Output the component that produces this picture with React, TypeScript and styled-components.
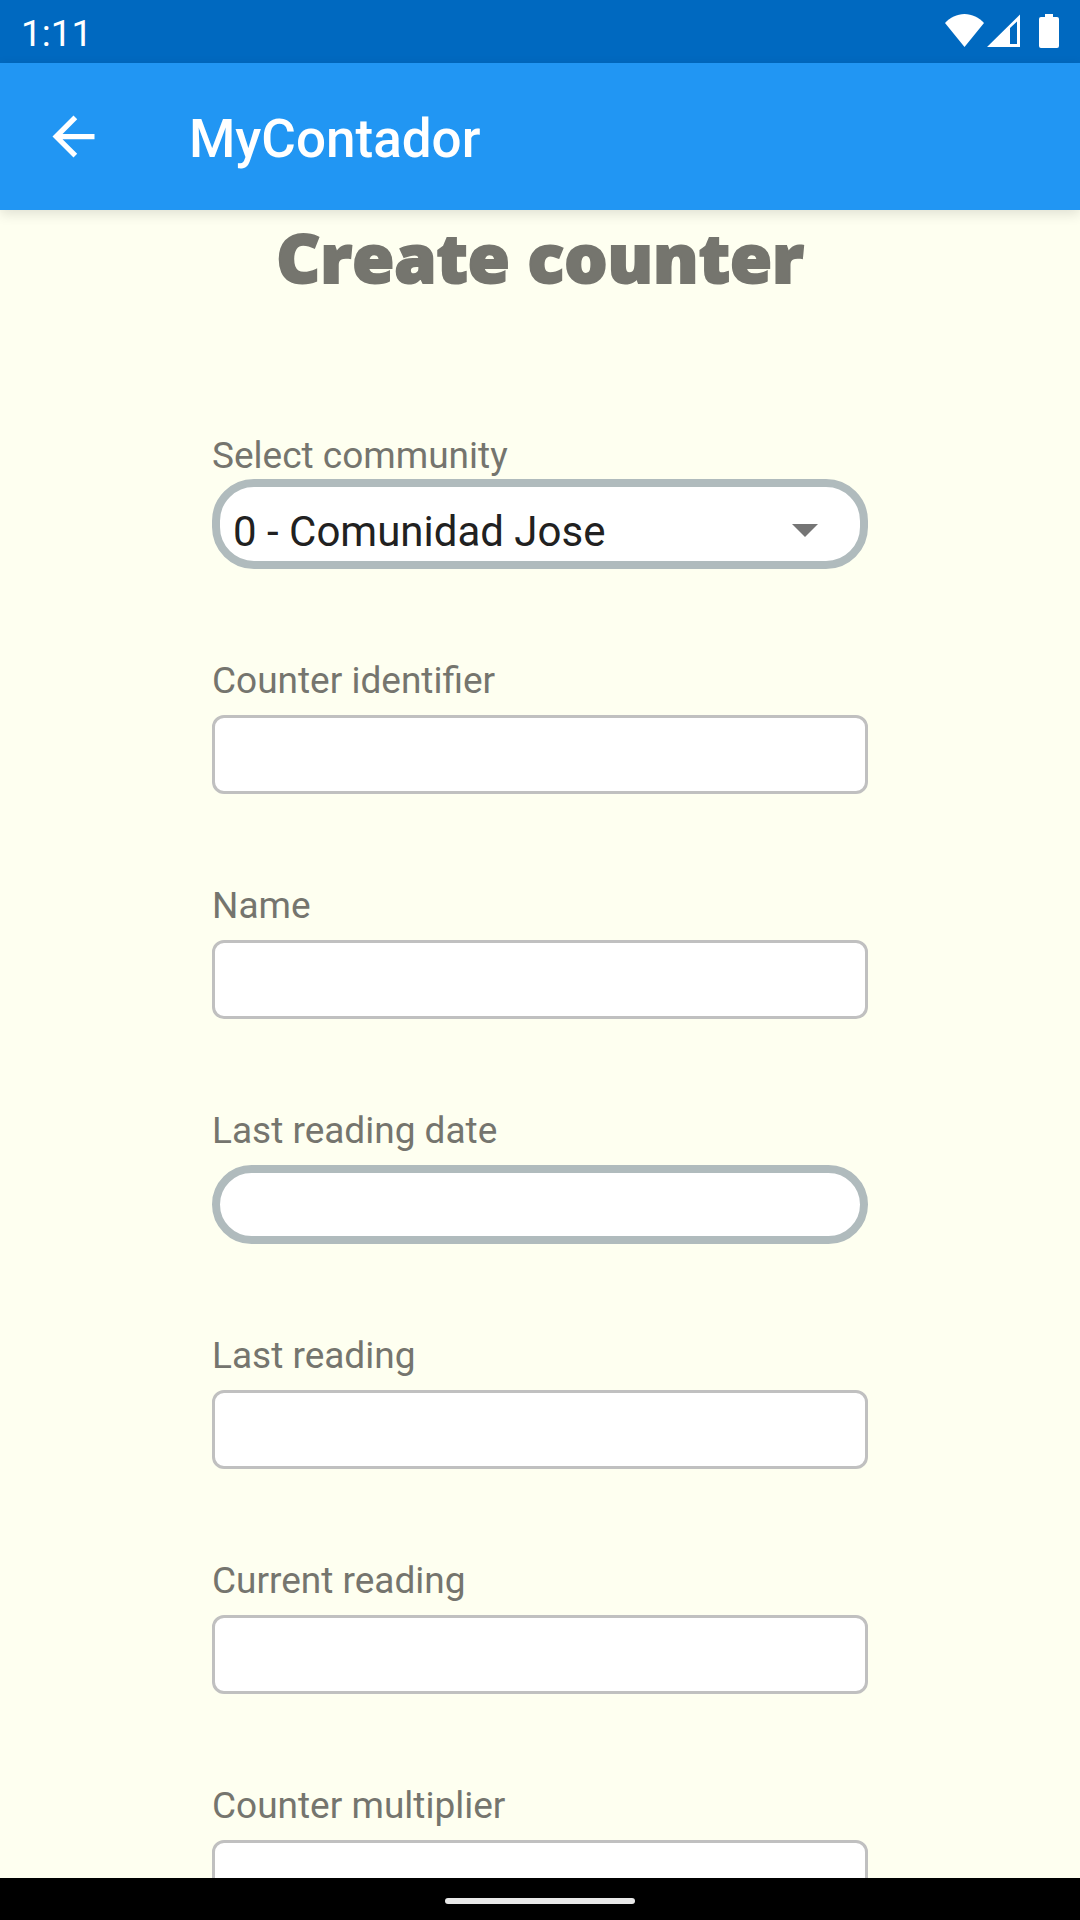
import React, { useId, useState } from "react";
import styled, { createGlobalStyle } from "styled-components";

const color = {
  primary: "#2196f3",
  primaryDark: "#0069c0",
  page: "#fefff0",
  label: "#75756e",
  text: "#212121",
  outline: "#c0c0c0",
  pill: "#b0bbbd",
};

const GlobalStyle = createGlobalStyle`
  *, *::before, *::after { box-sizing: border-box; }
  body { margin: 0; font-family: Roboto, "Liberation Sans", sans-serif; }
`;

const Screen = styled.div`
  display: flex;
  flex-direction: column;
  height: 100vh;
  background: ${color.page};
`;

const StatusBar = styled.div`
  display: flex;
  flex: none;
  align-items: center;
  justify-content: space-between;
  height: 63px;
  padding: 0 21px;
  background: ${color.primaryDark};
  color: #fff;
`;

const Clock = styled.time`
  padding-top: 4px;
  font-size: 37px;
  line-height: 44px;
`;

const StatusIcons = styled.svg`
  display: block;
  width: 114px;
  height: 34px;
  margin-bottom: 2px;
  fill: currentColor;
`;

const AppBar = styled.header`
  display: flex;
  flex: none;
  align-items: center;
  gap: 84px;
  height: 147px;
  padding: 0 42px;
  background: ${color.primary};
  color: #fff;
  box-shadow: 0 4px 12px rgba(0, 0, 0, 0.12);
  z-index: 1;
`;

const BackButton = styled.button`
  display: block;
  padding: 0;
  border: 0;
  background: none;
  color: inherit;
  cursor: pointer;

  svg {
    display: block;
    width: 63px;
    height: 63px;
    fill: currentColor;
  }
`;

const AppTitle = styled.span`
  padding-top: 4px;
  font-size: 53px;
  font-weight: 500;
  line-height: 62px;
`;

const Content = styled.main`
  flex: 1;
  min-height: 0;
  overflow: auto;
  scrollbar-width: none;
`;

const Heading = styled.h1`
  margin: 0;
  padding: 0 16px 130px;
  color: ${color.label};
  font-family: "Open Sans", "Noto Sans", sans-serif;
  font-size: 68px;
  font-weight: 800;
  line-height: 93px;
  text-align: center;
  -webkit-text-stroke: 2px ${color.label};
`;

const Form = styled.form`
  display: flex;
  flex-direction: column;
  gap: 89px;
  width: 100%;
  max-width: 656px;
  margin: 0 auto;
  padding-bottom: 89px;
`;

const Field = styled.div<{ $gap: number }>`
  display: flex;
  flex-direction: column;
  gap: ${(p) => p.$gap}px;
`;

const Label = styled.label`
  color: ${color.label};
  font-size: 37px;
  line-height: 46px;
`;

const Input = styled.input<{ $pill?: boolean }>`
  width: 100%;
  height: 79px;
  padding: 0 20px;
  border: ${(p) => (p.$pill ? `8px solid ${color.pill}` : `3px solid ${color.outline}`)};
  border-radius: ${(p) => (p.$pill ? 40 : 12)}px;
  outline: none;
  background: #fff;
  color: ${color.text};
  font: inherit;
  font-size: 37px;
`;

const SelectBox = styled.div`
  display: grid;
  align-items: center;

  > * {
    grid-area: 1 / 1;
  }
`;

const Select = styled.select`
  width: 100%;
  height: 90px;
  padding: 14px 80px 0 13px;
  border: 8px solid ${color.pill};
  border-radius: 42px;
  outline: none;
  appearance: none;
  background: #fff;
  color: ${color.text};
  font: inherit;
  font-size: 42px;
`;

const Caret = styled.svg`
  justify-self: end;
  width: 26px;
  height: 13px;
  margin: 13px 50px 0 0;
  fill: #757575;
  pointer-events: none;
`;

const NavBar = styled.div`
  display: flex;
  flex: none;
  align-items: center;
  justify-content: center;
  height: 42px;
  padding-top: 4px;
  background: #000;
`;

const HomeHandle = styled.div`
  width: 190px;
  height: 6px;
  border-radius: 3px;
  background: #e8e8e8;
`;

const communities = ["0 - Comunidad Jose"];

const fields = [
  { label: "Counter identifier" },
  { label: "Name" },
  { label: "Last reading date", pill: true },
  { label: "Last reading" },
  { label: "Current reading" },
  { label: "Counter multiplier" },
];

function TextField({ label, pill }: { label: string; pill?: boolean }) {
  const id = useId();
  const [value, setValue] = useState("");
  return (
    <Field $gap={11}>
      <Label htmlFor={id}>{label}</Label>
      <Input id={id} $pill={pill} value={value} onChange={(e) => setValue(e.target.value)} />
    </Field>
  );
}

function CommunityField() {
  const id = useId();
  return (
    <Field $gap={0}>
      <Label htmlFor={id}>Select community</Label>
      <SelectBox>
        <Select id={id}>
          {communities.map((name) => (
            <option key={name}>{name}</option>
          ))}
        </Select>
        <Caret viewBox="0 0 26 13" aria-hidden="true">
          <path d="M0 0h26L13 13z" />
        </Caret>
      </SelectBox>
    </Field>
  );
}

export default function App() {
  return (
    <>
      <GlobalStyle />
      <Screen>
        <StatusBar>
          <Clock>1:11</Clock>
          <StatusIcons viewBox="0 0 114 34" aria-hidden="true">
            <path d="M0 9C5 3.500 12 0 19.500 0S34 3.500 39 9L19.500 33z" />
            <path fillRule="evenodd" d="M42 33L75 0.500V33zM65 14V30H72V7.500z" />
            <path d="M100 0h8v3h4q2 0 2 2v27q0 2-2 2H96q-2 0-2-2V5q0-2 2-2h4z" />
          </StatusIcons>
        </StatusBar>
        <AppBar>
          <BackButton type="button" aria-label="Back">
            <svg viewBox="0 0 24 24" aria-hidden="true">
              <path d="M20 11H7.830l5.590-5.590L12 4l-8 8 8 8 1.410-1.410L7.830 13H20z" />
            </svg>
          </BackButton>
          <AppTitle>MyContador</AppTitle>
        </AppBar>
        <Content>
          <Heading>Create counter</Heading>
          <Form>
            <CommunityField />
            {fields.map((field) => (
              <TextField key={field.label} {...field} />
            ))}
          </Form>
        </Content>
        <NavBar>
          <HomeHandle />
        </NavBar>
      </Screen>
    </>
  );
}
